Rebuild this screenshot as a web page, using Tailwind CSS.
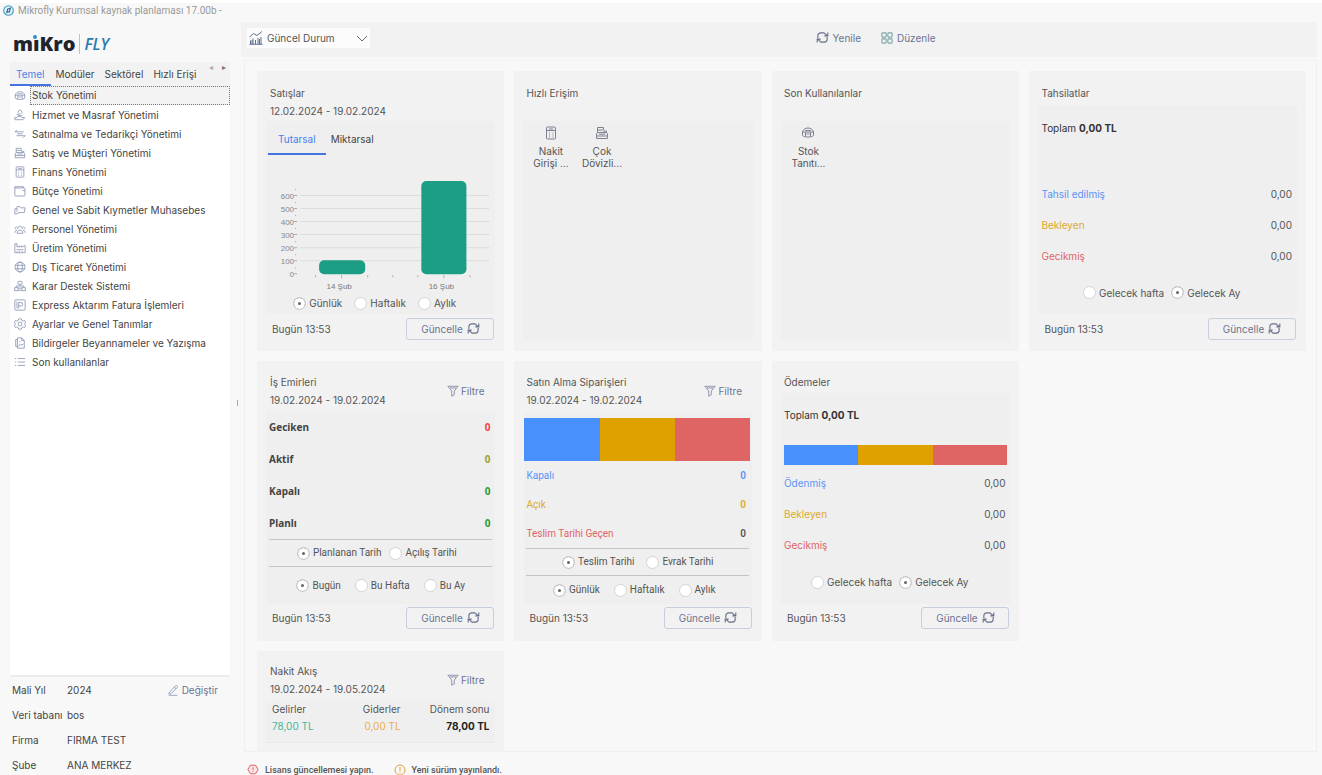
<!DOCTYPE html>
<html lang="tr">
<head>
<meta charset="utf-8">
<title>Mikrofly Kurumsal kaynak planlaması 17.00b</title>
<script src="https://cdn.jsdelivr.net/npm/@tailwindcss/browser@4"></script>
</head>
<body class="flex h-screen flex-col overflow-hidden border-t-[3px] border-white bg-[#f8f8f8] font-['Inter','Liberation_Sans',sans-serif] text-[10px] leading-[18px] text-[#555]">

<svg class="hidden" aria-hidden="true">
  <defs>
    <g id="refresh"><path d="M2 7.500V5a3 3 0 0 1 3-3h3.500L12 5M12.700 1.500v3.800H9M12 6.500V9a3 3 0 0 1-3 3H5.500L2 9M1.300 12.500V8.700H5"/></g>
    <g id="funnel"><path d="M1 1.500h12L8.500 7v4.500l-3 1.500V7z M3.500 3.500h7"/></g>
    <g id="box"><path d="M7 2c3 0 5 1.500 5.500 4M1.500 6C2 3.500 4 2 7 2M1 6h12M1.500 6v3.500c1 2 10 2 11 0V6M4 4.500h6M4.500 6v4.500M9.500 6v4.500M5.500 8h3"/></g>
    <g id="hand"><path d="M8 5.500a2.200 2.200 0 1 0-2 0M7 5.500v2M3 6.500h2v1.500h4.500M1 10h2.500l1-1.500h3l1.500 1.500h3.500l-2 2.500H1z"/></g>
    <g id="swap"><path d="M1 4.500h10.500M3.500 2.500l-2.500 2M13 9H3M10.500 11.500L13 9M4 6.800h6"/></g>
    <g id="register"><path d="M1.500 12.500h11V8l-1-1.500h-9l-1 1.500zM1.500 10h11M2.500 6.500v-5h6V4h-6M9 6.500V5h2.500v1.500M4 8.200h6"/></g>
    <g id="calc"><rect x="2.500" y="1" width="9" height="12" rx="1"/><path d="M2.500 4.500h9M5 3h4M5 7h1M8.500 7h1M5 9h1M8.500 9h1M5 11h1M8.500 11h1"/></g>
    <g id="wallet"><path d="M1 3.500V12a.8.8 0 0 0 .8.8H12a.8.8 0 0 0 .8-.8V4.500A1 1 0 0 0 12 3.500zM1 3.500V2h10v1.500M10 6.500h2.800"/></g>
    <g id="folders"><path d="M3.500 9V3h3l1 1.500h5.500L12 10H5l-1 1.500H1V5.500h2.500"/></g>
    <g id="people"><path d="M4.500 7a2.600 2.600 0 1 1 5 0M3.500 12c0-5 7-5 7 0zM1 11.500c0-2 1-3 2.500-3M13 11.500c0-2-1-3-2.500-3M2 7.500a1.500 1.500 0 0 1 2-2.500M12 7.500a1.500 1.500 0 0 0-2-2.500"/></g>
    <g id="factory"><path d="M1 12.500V2h2.500v4L6 4.500V6l3-1.500V6l4-2v8.500zM3 9h8M3 11h1M6 11h1M9 11h1"/></g>
    <g id="globe"><circle cx="7" cy="7" r="5.800"/><ellipse cx="7" cy="7" rx="2.700" ry="5.800"/><path d="M1.200 5h11.600M1.200 9h11.600"/></g>
    <g id="decision"><rect x="4.500" y="1.500" width="5" height="3.500" rx="1"/><path d="M7 5v2M2.500 9V7h9v2"/><rect x=".8" y="9" width="4" height="3.500"/><rect x="9.200" y="9" width="4" height="3.500"/><path d="M5 9.500h4M5 12h4"/></g>
    <g id="express"><rect x="1" y="1" width="12" height="12" rx="1"/><path d="M5.500 11V4h2.500a2 2 0 0 1 0 4.200H5.500M3.500 3v8"/></g>
    <g id="gear"><path d="M5.500 1h3l.5 1.800 1.800.8 1.700-.6 1 2.500L12.200 7l1.300 1.500-1 2.500-1.700-.5-1.800.9L8.500 13h-3L5 11.400l-1.800-.9-1.700.5-1-2.500L1.800 7 .5 5.500l1-2.500 1.700.6L5 2.800z"/><circle cx="7" cy="7" r="2.300"/></g>
    <g id="doc"><path d="M4 1h5l3 3v9H4zM9 1v3h3M4 3H2v8h2M5.500 11l2-3 1.500 1.500 2-1.500M6 5h1.500"/></g>
    <g id="list"><path d="M1 3h1.500M1 7h1.500M1 11h1.500M4.500 3H13M4.500 7H13M4.500 11H13"/></g>
    <g id="pencil"><path d="M3 9.500L10 2c1-1 3 .8 2 2L5 11l-3 .8zM8.500 3.500l2 2M2 13.200h10"/></g>
    <g id="grid4"><rect x="1" y="1" width="5" height="5" rx="1"/><rect x="8" y="1" width="5" height="5" rx="1"/><rect x="1" y="8" width="5" height="5" rx="1"/><rect x="8" y="8" width="5" height="5" rx="1"/></g>
    <g id="chart"><path d="M.5 6l4-3.500 3.500 2 5-4M1.500 13V9.500M4 13V7.500M6.500 13V9M9 13V7M12 13V6M.5 13.300h13M3 13V9M10.500 13V8"/></g>
  </defs>
</svg>

<header class="flex h-[15px] shrink-0 items-center gap-1 pl-[3px] font-['Roboto'] text-[10px] text-[#999]">
  <svg class="size-[11px]" viewBox="0 0 12 12" fill="none"><circle cx="6" cy="6" r="5.200" fill="#e9f4fa" stroke="#3c9ac6" stroke-width="1.200"/><path d="M4 9l1-4.500 3-1-1 4H4.500" stroke="#2a6f96" stroke-width="1.300"/></svg>
  <h1>Mikrofly Kurumsal kaynak planlaması 17.00b -</h1>
</header>

<div class="flex min-h-0 flex-1">
  <aside class="flex w-[230px] shrink-0 flex-col pl-[10px]">
    <div class="flex h-[44px] items-center gap-1 pt-2 pl-[3px] text-[#1d2430]" aria-label="mikro FLY">
      <span class="relative font-['Open_Sans'] text-[20px] leading-6 font-extrabold">mıKro<span class="absolute top-[3px] left-[20px] size-1 rounded-full bg-[#2f8fc6]"></span></span>
      <span class="h-5 w-px bg-[#b9c3cc]"></span>
      <span class="font-['Open_Sans'] text-[16px] leading-6 font-semibold text-[#2b7cae] italic">FLY</span>
    </div>

    <nav class="flex h-6 shrink-0 bg-[#f2f2f2]" aria-label="Menü grupları">
      <div class="flex min-w-0 flex-1 whitespace-nowrap">
        <button class="border-b-2 border-[#4573e0] px-1.5 pt-0.5 text-[#4a80e8]">Temel</button>
        <button class="px-[5px] text-[#444]">Modüler</button>
        <button class="px-[5px] text-[#444]">Sektörel</button>
        <button class="pl-[5px] text-[#444]">Hızlı Erişi</button>
      </div>
      <div class="flex w-[26px] items-start justify-around text-[8px] leading-[11px] text-[#777]">
        <button aria-label="Sola kaydır" class="text-[#aaa]">◂</button>
        <button aria-label="Sağa kaydır">▸</button>
      </div>
    </nav>

    <ul class="min-h-0 flex-1 overflow-hidden border-b-2 border-[#ececec] bg-white text-[#444] [&_a]:flex [&_a]:h-[19px] [&_a]:items-center [&_a]:gap-1 [&_a]:whitespace-nowrap [&_svg]:ml-1 [&_svg]:size-3 [&_svg]:shrink-0 [&_svg]:fill-none [&_svg]:stroke-[#8e98b5]">
      <li><a href="#"><svg viewBox="0 0 14 14"><use href="#box"/></svg><span class="flex-1 border border-dotted border-[#777] bg-[#f3f3f3] pl-px leading-[17px]">Stok Yönetimi</span></a></li>
      <li><a href="#"><svg viewBox="0 0 14 14"><use href="#hand"/></svg><span class="pl-0.5">Hizmet ve Masraf Yönetimi</span></a></li>
      <li><a href="#"><svg viewBox="0 0 14 14"><use href="#swap"/></svg><span class="pl-0.5">Satınalma ve Tedarikçi Yönetimi</span></a></li>
      <li><a href="#"><svg viewBox="0 0 14 14"><use href="#register"/></svg><span class="pl-0.5">Satış ve Müşteri Yönetimi</span></a></li>
      <li><a href="#"><svg viewBox="0 0 14 14"><use href="#calc"/></svg><span class="pl-0.5">Finans Yönetimi</span></a></li>
      <li><a href="#"><svg viewBox="0 0 14 14"><use href="#wallet"/></svg><span class="pl-0.5">Bütçe Yönetimi</span></a></li>
      <li><a href="#"><svg viewBox="0 0 14 14"><use href="#folders"/></svg><span class="pl-0.5">Genel ve Sabit Kıymetler Muhasebes</span></a></li>
      <li><a href="#"><svg viewBox="0 0 14 14"><use href="#people"/></svg><span class="pl-0.5">Personel Yönetimi</span></a></li>
      <li><a href="#"><svg viewBox="0 0 14 14"><use href="#factory"/></svg><span class="pl-0.5">Üretim Yönetimi</span></a></li>
      <li><a href="#"><svg viewBox="0 0 14 14"><use href="#globe"/></svg><span class="pl-0.5">Dış Ticaret Yönetimi</span></a></li>
      <li><a href="#"><svg viewBox="0 0 14 14"><use href="#decision"/></svg><span class="pl-0.5">Karar Destek Sistemi</span></a></li>
      <li><a href="#"><svg viewBox="0 0 14 14"><use href="#express"/></svg><span class="pl-0.5">Express Aktarım Fatura İşlemleri</span></a></li>
      <li><a href="#"><svg viewBox="0 0 14 14"><use href="#gear"/></svg><span class="pl-0.5">Ayarlar ve Genel Tanımlar</span></a></li>
      <li><a href="#"><svg viewBox="0 0 14 14"><use href="#doc"/></svg><span class="pl-0.5">Bildirgeler Beyannameler ve Yazışma</span></a></li>
      <li><a href="#"><svg viewBox="0 0 14 14"><use href="#list"/></svg><span class="pl-0.5">Son kullanılanlar</span></a></li>
    </ul>

    <dl class="grid h-[98px] shrink-0 auto-rows-[25px] grid-cols-[55px_1fr_auto] items-center pl-[2px] whitespace-nowrap text-[#444]">
      <dt>Mali Yıl</dt><dd>2024</dd>
      <dd><button class="mr-3 flex items-center gap-[3px] text-[#6c7391]"><svg class="size-3 fill-none stroke-[#8e98b5]" viewBox="0 0 14 14"><use href="#pencil"/></svg>Değiştir</button></dd>
      <dt>Veri tabanı</dt><dd class="col-span-2">bos</dd>
      <dt>Firma</dt><dd class="col-span-2">FIRMA TEST</dd>
      <dt>Şube</dt><dd class="col-span-2">ANA MERKEZ</dd>
    </dl>
  </aside>

  <div class="flex w-[11px] shrink-0 items-center justify-center pt-3 pl-1" role="separator"><span class="h-1.5 w-px bg-[#aaa]"></span></div>

  <main class="flex min-w-0 flex-1 flex-col pt-1 pr-[5px]">
    <div class="flex h-[35px] shrink-0 items-center bg-[#f2f2f2] pb-1 pl-1.5">
      <div class="relative flex h-5 w-[123px] items-center bg-[#fcfcfc]">
        <svg class="pointer-events-none absolute left-[2px] size-[14px] fill-none stroke-[#5f6f96]" viewBox="0 0 14 14"><use href="#chart"/></svg>
        <select aria-label="Görünüm" class="h-5 w-full appearance-none bg-transparent pl-5 text-[#555] outline-none"><option>Güncel Durum</option></select>
        <svg class="pointer-events-none absolute right-[2px] size-3 fill-none stroke-[#666]" viewBox="0 0 12 12"><path d="M1 4l5 5 5-5"/></svg>
      </div>
      <div class="flex flex-1 justify-center gap-[20px] pl-16 text-[#6c7391]">
        <button class="flex items-center gap-1"><svg class="size-[13px] fill-none stroke-[#666f8a] stroke-[1.2]" viewBox="0 0 14 14"><use href="#refresh"/></svg>Yenile</button>
        <button class="flex items-center gap-1"><svg class="size-3 fill-none stroke-[#7fa6a8] stroke-[1.3]" viewBox="0 0 14 14"><use href="#grid4"/></svg>Düzenle</button>
      </div>
    </div>

    <div class="mt-[3px] ml-[3px] min-h-0 flex-1 overflow-hidden border border-[#f0f0f0] pt-[10px] pr-[10px] pl-3">
      <div class="grid auto-rows-[minmax(280px,auto)] grid-cols-[repeat(3,minmax(0,247fr))_minmax(0,276fr)] gap-[10px] [&_input]:size-[13px] [&_input]:appearance-none [&_input]:rounded-full [&_input]:border [&_input]:border-[#d4d4d4] [&_input]:bg-white [&_input:checked]:bg-[#666] [&_input:checked]:shadow-[inset_0_0_0_4px_white] [&_label]:flex [&_label]:items-center [&_label]:gap-[3px] [&_label]:whitespace-nowrap [&_section]:flex [&_section]:min-w-0 [&_section]:flex-col [&_section]:bg-[#f2f2f2]">

        <section>
          <div class="h-[50px] px-[13px] pt-[13px]"><h2>Satışlar</h2><p>12.02.2024 - 19.02.2024</p></div>
          <div class="mx-[9px] flex flex-1 flex-col bg-[#efefef]">
            <div class="flex h-[34px] text-[#444]">
              <button class="ml-[2px] border-b-2 border-[#4573e0] px-[10px] pt-1 text-[#4a80e8]">Tutarsal</button>
              <button class="px-[5px] pt-0.5">Miktarsal</button>
            </div>
            <svg class="mt-auto w-full font-['Liberation_Sans'] text-[8px]" viewBox="0 0 229 118" role="img" aria-label="Günlük satış tutarı">
              <path d="M34 21.500h189M34 34.500h189M34 47.500h189M34 60.500h189M34 73.500h189M34 86.500h189" stroke="#ddd"/>
              <path d="M28 21.500h3M28 34.500h3M28 47.500h3M28 60.500h3M28 73.500h3M28 86.500h3M28 99.500h3M29 15.500h1M29 28.500h1M29 41.500h1M29 54.500h1M29 67.500h1M29 80.500h1M29 93.500h1M49.500 101v2M75.500 101v3M101.500 101v2M126.500 101v2M151.500 101v2M177.500 101v3M203.500 101v2" stroke="#aaa"/>
              <rect x="53" y="86" width="46" height="14" rx="5" fill="#1c9e84"/>
              <rect x="155" y="7" width="45" height="93" rx="5" fill="#1c9e84"/>
              <g fill="#888" text-anchor="end"><text x="28" y="25">600</text><text x="28" y="38">500</text><text x="28" y="51">400</text><text x="28" y="64">300</text><text x="28" y="77">200</text><text x="28" y="90">100</text><text x="28" y="103">0</text></g>
              <g fill="#777" text-anchor="middle"><text x="73" y="115">14 Şub</text><text x="175" y="115">16 Şub</text></g>
            </svg>
            <div class="flex h-[22px] items-center justify-center gap-3 pr-3">
              <label><input type="radio" name="sales" checked>Günlük</label><label><input type="radio" name="sales">Haftalık</label><label><input type="radio" name="sales">Aylık</label>
            </div>
          </div>
          <footer class="flex h-[37px] items-center justify-between pr-[10px] pb-2 pl-[15px]"><span>Bugün 13:53</span><button class="flex h-[22px] w-[88px] items-center justify-center gap-1 rounded-[3px] border border-[#c6cddd] text-[#6c7391]">Güncelle<svg class="size-[13px] fill-none stroke-[#666f8a] stroke-[1.2]" viewBox="0 0 14 14"><use href="#refresh"/></svg></button></footer>
        </section>

        <section>
          <div class="h-[50px] px-3 pt-[13px]"><h2>Hızlı Erişim</h2></div>
          <div class="mx-[9px] mb-[10px] flex flex-1 items-start bg-[#efefef] pt-[5px] pl-[2px] leading-3">
            <button class="flex w-[51px] flex-col items-center gap-[5px]"><svg class="size-[14px] fill-none stroke-[#7d8293]" viewBox="0 0 14 14"><use href="#calc"/></svg><span class="whitespace-nowrap">Nakit<br>Girişi ...</span></button>
            <button class="flex w-[51px] flex-col items-center gap-[5px]"><svg class="size-[14px] fill-none stroke-[#7d8293]" viewBox="0 0 14 14"><use href="#register"/></svg><span class="whitespace-nowrap">Çok<br>Dövizli...</span></button>
          </div>
        </section>

        <section>
          <div class="h-[50px] px-3 pt-[13px]"><h2>Son Kullanılanlar</h2></div>
          <div class="mx-[9px] mb-[10px] flex flex-1 items-start bg-[#efefef] pt-[5px] pl-[2px] leading-3">
            <button class="flex w-[51px] flex-col items-center gap-[5px]"><svg class="size-[14px] fill-none stroke-[#7d8293]" viewBox="0 0 14 14"><use href="#box"/></svg><span class="whitespace-nowrap">Stok<br>Tanıtı...</span></button>
          </div>
        </section>

        <section>
          <div class="h-[35px] px-3 pt-[13px]"><h2>Tahsilatlar</h2></div>
          <div class="mx-[9px] flex flex-1 flex-col bg-[#efefef] px-[3px]">
            <p class="flex h-11 items-center gap-[3px] text-[#333]">Toplam <b>0,00 TL</b></p>
            <dl class="mt-7 grid auto-rows-[31px] grid-cols-[1fr_auto] items-center pr-[2px]">
              <dt class="text-[#5b93f5]">Tahsil edilmiş</dt><dd>0,00</dd>
              <dt class="text-[#dda92c]">Bekleyen</dt><dd>0,00</dd>
              <dt class="text-[#e06464]">Gecikmiş</dt><dd>0,00</dd>
            </dl>
            <div class="flex flex-1 items-center justify-center gap-[7px] pr-3">
              <label><input type="radio" name="collect">Gelecek hafta</label><label><input type="radio" name="collect" checked>Gelecek Ay</label>
            </div>
          </div>
          <footer class="flex h-[37px] items-center justify-between pr-[10px] pb-2 pl-[15px]"><span>Bugün 13:53</span><button class="flex h-[22px] w-[88px] items-center justify-center gap-1 rounded-[3px] border border-[#c6cddd] text-[#6c7391]">Güncelle<svg class="size-[13px] fill-none stroke-[#666f8a] stroke-[1.2]" viewBox="0 0 14 14"><use href="#refresh"/></svg></button></footer>
        </section>

        <section>
          <div class="flex h-[50px] items-center justify-between pt-[10px] pr-5 pl-[13px]"><div><h2>İş Emirleri</h2><p>19.02.2024 - 19.02.2024</p></div><button class="flex items-center gap-[2px] text-[#6c7391]"><svg class="size-3 fill-none stroke-[#7d86a0]" viewBox="0 0 14 14"><use href="#funnel"/></svg>Filtre</button></div>
          <div class="mx-[9px] flex flex-1 flex-col bg-[#efefef] px-[3px]">
            <dl class="grid auto-rows-[32px] grid-cols-[1fr_auto] items-center pr-[2px] font-['Noto_Sans'] font-bold text-[#444]">
              <dt>Geciken</dt><dd class="text-[#ef4444]">0</dd>
              <dt>Aktif</dt><dd class="text-[#a3a02c]">0</dd>
              <dt>Kapalı</dt><dd class="text-[#2c9a35]">0</dd>
              <dt>Planlı</dt><dd class="text-[#2c9a35]">0</dd>
            </dl>
            <div class="flex h-[28px] items-center justify-center gap-2 border-y border-[#c4c4c4] pr-2 font-['Roboto']">
              <label><input type="radio" name="wdate" checked>Planlanan Tarih</label><label><input type="radio" name="wdate">Açılış Tarihi</label>
            </div>
            <div class="flex flex-1 items-center justify-center gap-[14px] font-['Roboto']">
              <label><input type="radio" name="wrange" checked>Bugün</label><label><input type="radio" name="wrange">Bu Hafta</label><label><input type="radio" name="wrange">Bu Ay</label>
            </div>
          </div>
          <footer class="flex h-[37px] items-center justify-between pr-[10px] pb-[10px] pl-[15px]"><span>Bugün 13:53</span><button class="flex h-[22px] w-[88px] items-center justify-center gap-1 rounded-[3px] border border-[#c6cddd] text-[#6c7391]">Güncelle<svg class="size-[13px] fill-none stroke-[#666f8a] stroke-[1.2]" viewBox="0 0 14 14"><use href="#refresh"/></svg></button></footer>
        </section>

        <section>
          <div class="flex h-[50px] items-center justify-between pt-[10px] pr-5 pl-3"><div><h2>Satın Alma Siparişleri</h2><p>19.02.2024 - 19.02.2024</p></div><button class="flex items-center gap-[2px] text-[#6c7391]"><svg class="size-3 fill-none stroke-[#7d86a0]" viewBox="0 0 14 14"><use href="#funnel"/></svg>Filtre</button></div>
          <div class="mx-[10px] flex flex-1 flex-col bg-[#efefef] pt-[7px]">
            <div class="mr-[2px] grid h-[43px] grid-cols-3"><div class="bg-[#4890fc]"></div><div class="bg-[#dfa100]"></div><div class="bg-[#df6464]"></div></div>
            <dl class="grid auto-rows-[29px] grid-cols-[1fr_auto] items-center pr-1.5 pl-[2px] font-['Roboto']">
              <dt class="text-[#5b93f5]">Kapalı</dt><dd class="font-semibold text-[#5b93f5]">0</dd>
              <dt class="text-[#dda92c]">Açık</dt><dd class="font-semibold text-[#dda92c]">0</dd>
              <dt class="text-[#e06464]">Teslim Tarihi Geçen</dt><dd class="font-semibold">0</dd>
            </dl>
            <div class="mr-[3px] ml-[2px] flex h-[28px] items-center justify-center gap-3 border-y border-[#c4c4c4] font-['Roboto']">
              <label><input type="radio" name="odate" checked>Teslim Tarihi</label><label><input type="radio" name="odate">Evrak Tarihi</label>
            </div>
            <div class="flex flex-1 items-center justify-center gap-[14px] pr-2 font-['Roboto']">
              <label><input type="radio" name="orange" checked>Günlük</label><label><input type="radio" name="orange">Haftalık</label><label><input type="radio" name="orange">Aylık</label>
            </div>
          </div>
          <footer class="flex h-[37px] items-center justify-between pr-[10px] pb-[10px] pl-[15px]"><span>Bugün 13:53</span><button class="flex h-[22px] w-[88px] items-center justify-center gap-1 rounded-[3px] border border-[#c6cddd] text-[#6c7391]">Güncelle<svg class="size-[13px] fill-none stroke-[#666f8a] stroke-[1.2]" viewBox="0 0 14 14"><use href="#refresh"/></svg></button></footer>
        </section>

        <section>
          <div class="h-8 px-3 pt-3"><h2>Ödemeler</h2></div>
          <div class="mx-[9px] flex flex-1 flex-col bg-[#efefef] px-[3px]">
            <p class="flex h-11 items-center gap-[3px] text-[#333]">Toplam <b>0,00 TL</b></p>
            <div class="mt-2 grid h-5 grid-cols-3"><div class="bg-[#4890fc]"></div><div class="bg-[#dfa100]"></div><div class="bg-[#df6464]"></div></div>
            <dl class="mt-[2px] grid auto-rows-[31px] grid-cols-[1fr_auto] items-center pr-[2px]">
              <dt class="text-[#5b93f5]">Ödenmiş</dt><dd>0,00</dd>
              <dt class="text-[#dda92c]">Bekleyen</dt><dd>0,00</dd>
              <dt class="text-[#e06464]">Gecikmiş</dt><dd>0,00</dd>
            </dl>
            <div class="flex flex-1 items-center justify-center gap-[7px] pr-3">
              <label><input type="radio" name="pay">Gelecek hafta</label><label><input type="radio" name="pay" checked>Gelecek Ay</label>
            </div>
          </div>
          <footer class="flex h-[37px] items-center justify-between pr-[10px] pb-[10px] pl-[15px]"><span>Bugün 13:53</span><button class="flex h-[22px] w-[88px] items-center justify-center gap-1 rounded-[3px] border border-[#c6cddd] text-[#6c7391]">Güncelle<svg class="size-[13px] fill-none stroke-[#666f8a] stroke-[1.2]" viewBox="0 0 14 14"><use href="#refresh"/></svg></button></footer>
        </section>

        <section class="col-start-1">
          <div class="flex h-[50px] items-center justify-between pt-2 pr-5 pl-[13px]"><div><h2>Nakit Akış</h2><p>19.02.2024 - 19.05.2024</p></div><button class="flex items-center gap-[2px] text-[#6c7391]"><svg class="size-3 fill-none stroke-[#7d86a0]" viewBox="0 0 14 14"><use href="#funnel"/></svg>Filtre</button></div>
          <div class="mx-[9px] flex h-[42px] items-start justify-between border-b border-[#e9e9e9] bg-[#efefef] pr-1.5 pl-1.5 leading-[17px]">
            <p class="text-[#555]">Gelirler<br><span class="text-[#3fb79d]">78,00 TL</span></p>
            <p class="pl-5 text-right">Giderler<br><span class="text-[#ecae45]">0,00 TL</span></p>
            <p class="text-right">Dönem sonu<br><b class="text-[#222]">78,00 TL</b></p>
          </div>
        </section>
      </div>
    </div>

    <footer class="flex h-[23px] shrink-0 items-center gap-[20px] pt-3 pl-1.5 font-['Roboto'] text-[9px] font-medium whitespace-nowrap text-[#555]">
      <span class="flex items-center gap-1.5"><svg class="h-[11px] w-3 fill-[#fbe3e5] stroke-[#d84b57]" viewBox="0 0 14 12"><path d="M4 1h6l3 5-3 5H4L1 6zM7 3.500v3M7 8v1"/></svg>Lisans güncellemesi yapın.</span>
      <span class="flex items-center gap-1.5"><svg class="size-3 fill-none stroke-[#e0a040]" viewBox="0 0 12 12"><circle cx="6" cy="6" r="5"/><path d="M6 3v4M6 8v1"/></svg>Yeni sürüm yayınlandı.</span>
    </footer>
  </main>
</div>
</body>
</html>
